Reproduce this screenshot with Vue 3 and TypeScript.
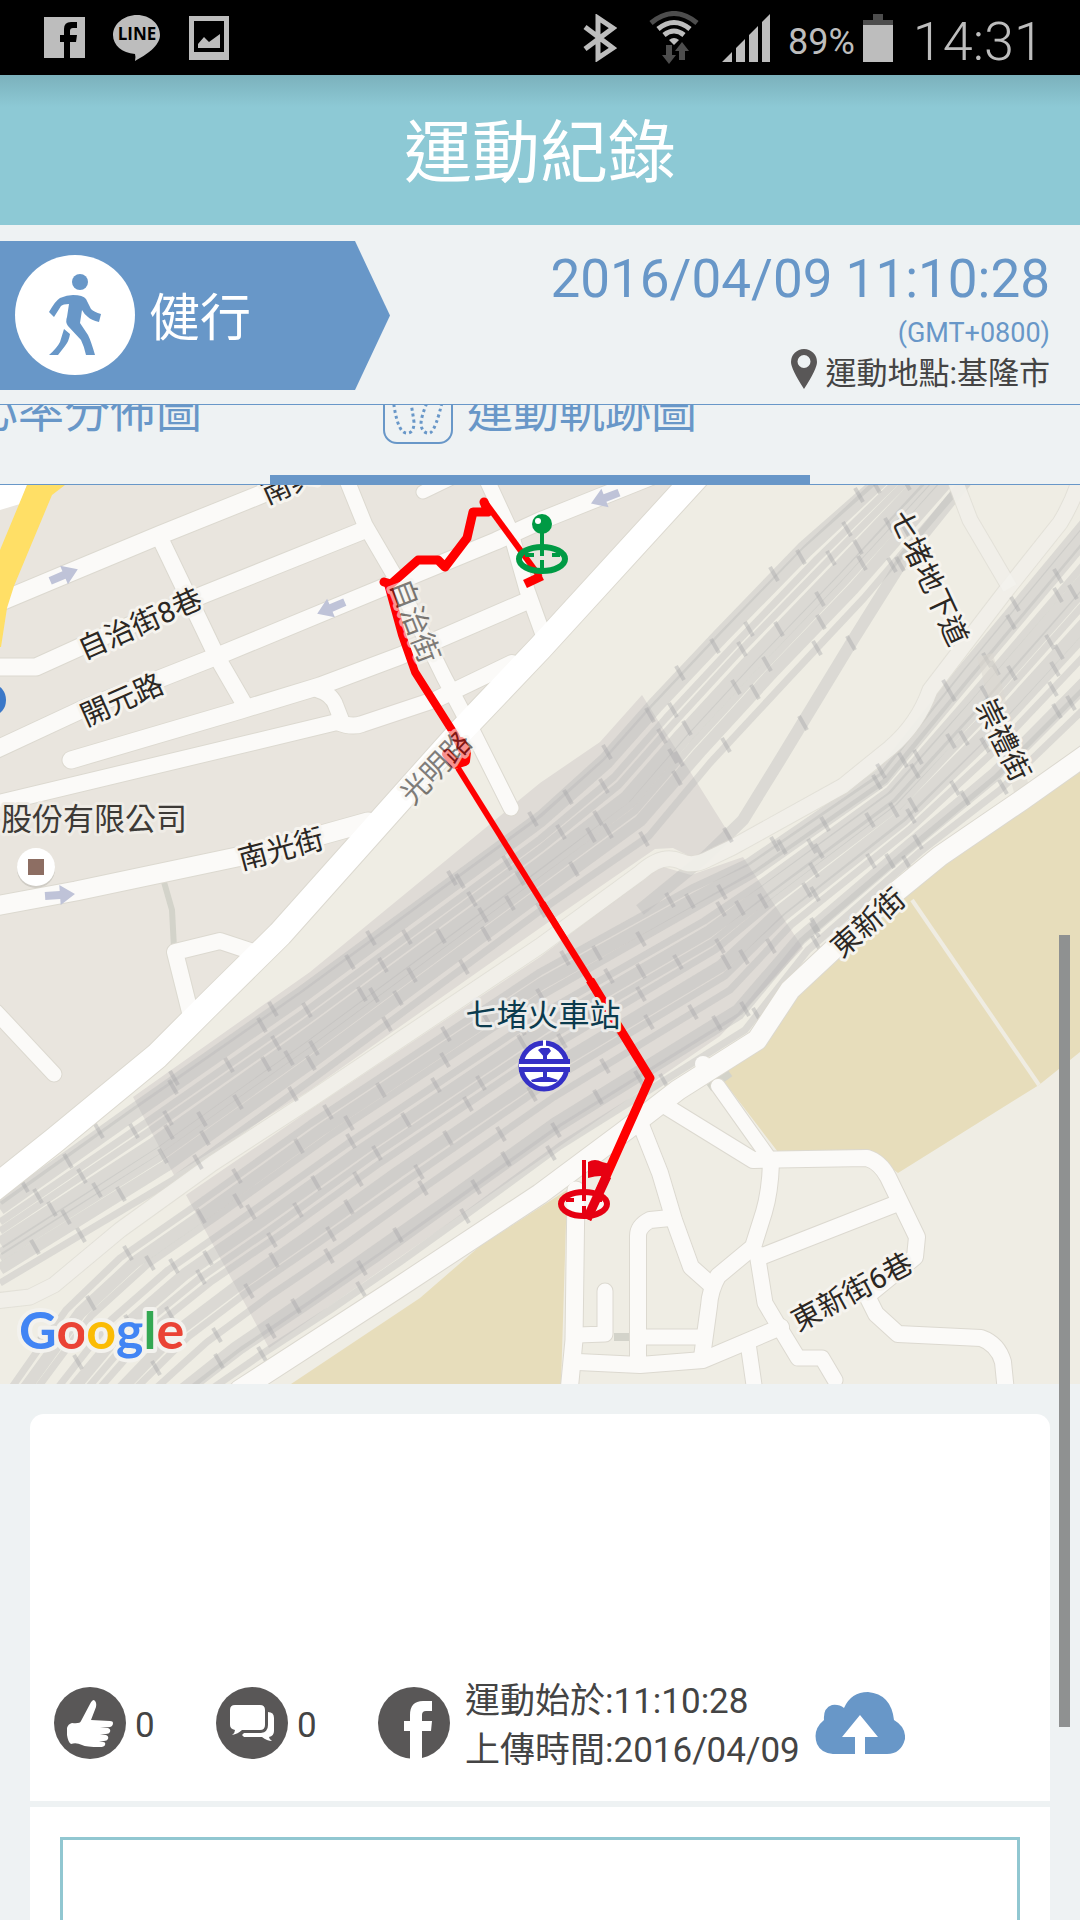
<script setup lang="ts">
import { computed, ref } from 'vue'

type Point = [number, number]

interface Road {
  d: string
  width: number
}

interface MapLabel {
  text: string
  x: number
  y: number
  angle: number
  faded?: boolean
}

const activeTab = ref('track')
const likes = ref(0)
const comments = ref(0)

const blockRoads: Road[] = [
  { d: 'M-10 606L64 575L160 535L262 494L300 478', width: 18 },
  { d: 'M-5 667H36L100 638L205 594L362 531', width: 17 },
  { d: 'M-5 750L83 709L220 655L382 588L496 541L540 521L600 497L650 477', width: 17 },
  { d: 'M71 760L241 710L320 686L400 656L527 601', width: 17 },
  { d: 'M-5 804L337 722Q352 728 362 724L437 699L512 663', width: 16 },
  { d: 'M318 690Q332 694 336 706L343 724', width: 15 },
  { d: 'M346 478L365 525L393 573L444 677L472 730L511 808', width: 15 },
  { d: 'M160 538L217 657L243 702', width: 16 },
  { d: 'M486 478L510 530L527 590L545 640', width: 15 },
  { d: 'M423 492L460 474', width: 13 },
  { d: 'M-5 906L76 891L237 857L300 841L368 822', width: 19 },
  { d: 'M190 1012L175 952L220 941L256 953', width: 16 },
  { d: 'M-4 1012L54 1074', width: 15 },
]

const eastRoads: Road[] = [
  { d: 'M576 1190L574 1340L569 1392', width: 17 },
  { d: 'M641 1125L660 1173L674 1220L691 1267L709 1283', width: 16 },
  { d: 'M667 1107L753 1160L867 1158Q880 1162 888 1177L917 1237L915 1257L867 1296L876 1314L898 1334L981 1338Q998 1344 1003 1362L1006 1392', width: 16 },
  { d: 'M718 1086L767 1155', width: 14 },
  { d: 'M771 1163Q770 1192 764 1212L753 1247L718 1276Q710 1290 709 1306L702 1357', width: 16 },
  { d: 'M760 1257L898 1203', width: 16 },
  { d: 'M757 1253L765 1303L781 1330L798 1358H822L835 1380', width: 15 },
  { d: 'M670 1218L650 1220Q638 1226 638 1236V1363', width: 16 },
  { d: 'M578 1362L640 1365L703 1360L781 1327', width: 16 },
  { d: 'M605 1291V1334L578 1335', width: 15 },
  { d: 'M643 1337H702', width: 15 },
  { d: 'M748 1343L755 1392', width: 15 },
]

const railRoads: Road[] = [
  { d: 'M-5 1301L30 1297L54 1285L120 1230L213 1163L310 1100L540 946L640 873Q662 853 680 861Q692 867 706 860L733 847L843 786L890 748Q918 724 930 690L1005 592L1060 523Q1074 500 1080 478', width: 15 },
  { d: 'M954 478L970 520L1010 588', width: 15 },
]

const edgeRoads: Road[] = [
  { d: 'M1090 752L1022 800L940 856L880 905L836 947L790 990L757 1040L678 1090L626 1130L540 1194L396 1289L240 1390', width: 20 },
]

const mainRoad: Road = {
  d: 'M700 473L540 648L462 730L355 850L280 934L205 1008L157 1056L55 1140L-8 1190',
  width: 25,
}

const northUpper: Point[] = [[0, 1200], [133, 1104], [300, 988], [540, 812], [602, 755], [650, 702], [715, 632], [800, 545], [874, 480]]
const northLower: Point[] = [[0, 1286], [174, 1182], [310, 1084], [540, 914], [650, 838], [712, 765], [790, 680], [866, 600], [968, 480]]
const southUpper: Point[] = [[10, 1390], [66, 1310], [120, 1258], [192, 1208], [310, 1124], [540, 972], [692, 888], [748, 862], [880, 772], [962, 668], [1085, 520]]
const southLower: Point[] = [[210, 1390], [262, 1354], [330, 1310], [400, 1262], [470, 1212], [560, 1146], [745, 1030], [808, 950], [920, 852], [1000, 790], [1085, 708]]

function blend(upper: Point[], lower: Point[], t: number): Point[] {
  return upper.map(([x, y], i) => [
    Math.round(x + (lower[i][0] - x) * t),
    Math.round(y + (lower[i][1] - y) * t),
  ])
}

function toPath(points: Point[]): string {
  return 'M' + points.map(([x, y]) => `${x} ${y}`).join('L')
}

function bundle(upper: Point[], lower: Point[], stops: number[]): Point[][] {
  return stops.map((t) => blend(upper, lower, t))
}

const siding: Point[] = [[640, 910], [705, 857], [743, 820], [780, 760], [853, 640], [905, 557], [967, 480]]

const tracks: Point[][] = [
  ...bundle(northUpper, northLower, [0.02, 0.1, 0.26, 0.36, 0.5, 0.6, 0.68, 0.8, 0.97]),
  ...bundle(southUpper, southLower, [0, 0.07, 0.13, 0.23, 0.31, 0.38, 0.44, 0.55, 0.62, 0.72, 0.86, 0.9, 1]),
  siding,
]

// Short cross marks that the map draws along each railway line.
const ties = computed(() => {
  let d = ''
  tracks.forEach((line, n) => {
    let next = 30 + ((n * 53) % 90)
    for (let i = 0; i < line.length - 1; i++) {
      const [ax, ay] = line[i]
      const [bx, by] = line[i + 1]
      const length = Math.hypot(bx - ax, by - ay)
      while (next < length) {
        const x = Math.round(ax + ((bx - ax) * next) / length)
        const y = Math.round(ay + ((by - ay) * next) / length)
        d += `M${x - 4} ${y - 7}l8 14`
        next += 92 + ((n * 37 + i * 29) % 50)
      }
      next -= length
    }
  })
  return d
})

const labels: MapLabel[] = [
  { text: '南興路', x: 303, y: 478, angle: -24 },
  { text: '自治街8巷', x: 140, y: 624, angle: -24 },
  { text: '開元路', x: 122, y: 700, angle: -24 },
  { text: '南光街', x: 281, y: 849, angle: -15 },
  { text: '光明路', x: 436, y: 768, angle: -46, faded: true },
  { text: '自治街', x: 415, y: 621, angle: 69, faded: true },
  { text: '七堵地下道', x: 929, y: 578, angle: 65 },
  { text: '崇禮街', x: 1003, y: 740, angle: 64 },
  { text: '東新街', x: 868, y: 923, angle: -41 },
  { text: '東新街6巷', x: 852, y: 1292, angle: -28 },
]

const arrows = [
  { x: 64, y: 575, angle: -23 },
  { x: 331, y: 608, angle: 157 },
  { x: 605, y: 498, angle: 159 },
  { x: 60, y: 895, angle: -4 },
]
</script>

<template>
  <div class="screen">
    <div class="status-bar">
      <div class="notices">
        <svg width="41" height="41" viewBox="0 0 41 41" aria-hidden="true">
          <path fill="#bdbdbd" d="M0 0H41V41H26V25H32L33 18H26V14Q26 11 29 11H33V5H27Q20 5 20 12V18H16V25H20V41H0Z" />
        </svg>
        <svg width="48" height="46" viewBox="0 0 48 46" aria-hidden="true">
          <path fill="#bdbdbd" d="M24 0C37 0 47 9 47 20C47 31 33 40 22 46Q23 42 22 39C9 38 0 30 0 20C0 9 11 0 24 0Z" />
          <text x="24" y="25" text-anchor="middle" class="line-logo">LINE</text>
        </svg>
        <svg width="40" height="44" viewBox="0 0 40 44" aria-hidden="true">
          <path fill="#bdbdbd" fill-rule="evenodd" d="M0 0H40V44H0ZM5 5V36H35V5ZM9 32V28L15 21L20 26L31 18V32Z" />
        </svg>
      </div>
      <div class="device">
        <svg class="bluetooth" width="34" height="48" viewBox="0 0 34 48" aria-hidden="true">
          <path fill="none" stroke="#bdbdbd" stroke-width="5" d="M2 13L30 34L15 44V4L30 14L2 35" />
        </svg>
        <svg class="wifi" width="50" height="54" viewBox="0 0 50 54" aria-hidden="true">
          <path fill="none" stroke="#4d4d4d" stroke-width="5" d="M2 12Q25 -7 48 12" />
          <path fill="none" stroke="#bdbdbd" stroke-width="5" d="M9 18Q25 5 41 18M15 24Q25 16 35 24" />
          <path fill="#bdbdbd" d="M20 29Q25 25 30 29L25 34Z" />
          <path fill="#4d4d4d" d="M17 34H23V44H27L20 53L13 44H17ZM30 49V40H26L33 31L40 40H36V49Z" />
        </svg>
        <svg class="signal" width="48" height="48" viewBox="0 0 48 48" aria-hidden="true">
          <path fill="#bdbdbd" d="M0 48L10 38V48ZM14 48V34L23 25V48ZM27 48V21L36 12V48ZM40 48V8L48 0V48Z" />
        </svg>
        <span class="percent">89%</span>
        <svg class="battery" width="30" height="48" viewBox="0 0 30 48" aria-hidden="true">
          <path fill="#4d4d4d" d="M10 0H20V6H30V12H0V6H10Z" />
          <path fill="#bdbdbd" d="M0 11H30V48H0Z" />
        </svg>
        <span class="clock">14:31</span>
      </div>
    </div>

    <header class="title-bar">
      <h1>運動紀錄</h1>
    </header>

    <section class="summary">
      <div class="sport">
        <svg width="120" height="120" viewBox="0 0 120 120" aria-hidden="true">
          <circle cx="60" cy="60" r="60" fill="#fff" />
          <g fill="#6897c8">
            <circle cx="65" cy="27" r="8" />
            <path d="M34 57Q41 45 45 43Q52 40 58 40Q68 40 71 44L76 54Q79 57 86 59L84 67Q76 65 73 62Q69 59 67 55L65 68L73 80Q76 86 80 100H71Q69 91 66 85L53 71Q50 67 52 62L54 49Q48 49 46 51L39 62Z" />
            <path d="M49 74L55 79Q54 86 50 91L43 100H34Q42 93 45 87Z" />
          </g>
        </svg>
        <span class="sport-name">健行</span>
      </div>
      <div class="when">
        <time class="date" datetime="2016-04-09T11:10:28+08:00">2016/04/09 11:10:28</time>
        <span class="zone">(GMT+0800)</span>
        <span class="place">
          <svg width="26" height="40" viewBox="0 0 26 40" aria-hidden="true">
            <path fill="#595757" fill-rule="evenodd" d="M13 0A13 13 0 0 1 26 13Q26 20 13 40Q0 20 0 13A13 13 0 0 1 13 0ZM13 6A6 6 0 0 0 13 19A6 6 0 0 0 13 6Z" />
          </svg>
          運動地點:基隆市
        </span>
      </div>
    </section>

    <nav class="tabs">
      <div class="tab-track">
        <button type="button" class="tab tab-heart" :class="{ active: activeTab === 'heart' }" @click="activeTab = 'heart'">
          <span class="tab-text">心率分佈圖</span>
        </button>
        <button type="button" class="tab" :class="{ active: activeTab === 'track' }" @click="activeTab = 'track'">
          <svg width="70" height="70" viewBox="0 0 70 70" aria-hidden="true">
            <rect x="1" y="1" width="68" height="68" rx="13" fill="none" stroke="#6897c8" stroke-width="2" />
            <path fill="none" stroke="#6897c8" stroke-width="3" stroke-dasharray="3 3" d="M10 24Q14 58 23 59Q31 60 31 48Q29 34 27 24M46 24Q38 42 38 50Q39 60 47 59Q53 56 60 24" />
          </svg>
          <span class="tab-text">運動軌跡圖</span>
        </button>
      </div>
    </nav>

    <svg class="map" viewBox="0 485 1080 899" role="img" aria-label="運動軌跡圖">
      <rect x="0" y="485" width="1080" height="899" fill="#e9e5de" />
      <path fill="#efede4" d="M700 473L540 648L462 730L280 934L157 1056L0 1183V1384H1080V485Z" />
      <path fill="#e9e5de" d="M670 485L545 638L500 530L650 485Z" />
      <path fill="#e7ddbb" d="M1080 765L1022 800L905 893L836 947L757 1040L715 1070L778 1152L867 1150L898 1173L1039 1085L1080 1052Z" />
      <path fill="none" stroke="#efece2" stroke-width="4" d="M912 900L1039 1085" />
      <path fill="#e7ddbb" d="M291 1384L420 1298L480 1246L567 1190L561 1384Z" />
      <path fill="#dfdbd6" d="M133 1097L310 972L540 783L600 742L642 695L733 840L693 858L673 848L655 849L540 928L310 1090L174 1175Z" />
      <path fill="#dfdbd6" d="M186 1195L310 1110L540 957L660 866L691 875L743 857L803 948L720 1036L560 1146L269 1348Z" />

      <g fill="none" stroke-linejoin="round">
        <path v-for="(line, i) in tracks" :key="'t' + i" :d="toPath(line)" class="rail" :class="{ wide: i % 3 === 1 }" />
        <path v-for="(r, i) in railRoads" :key="'ro' + i" :d="r.d" :stroke-width="r.width + 2" stroke="#dedbd3" opacity="0.7" />
        <path v-for="(r, i) in railRoads" :key="'ri' + i" :d="r.d" :stroke-width="r.width" stroke="#f4f2ed" opacity="0.8" />
        <path :d="ties" class="tie" />
        <path d="M985 655L1023 795" stroke="#dbd8d0" stroke-width="16" opacity="0.5" />
        <path d="M164 882L172 910L174 948" stroke="#d3d3ca" stroke-width="6" />
        <path d="M614 1337H630M709 1088L730 1073" stroke="#d3d3ca" stroke-width="8" />
      </g>

      <path fill="#fff" d="M0 485H27L20 504L0 510Z" />

      <g fill="none" stroke-linecap="round" stroke-linejoin="round">
        <path v-for="(r, i) in [...blockRoads, ...eastRoads, ...edgeRoads, mainRoad]" :key="'o' + i" :d="r.d" :stroke-width="r.width + 2" stroke="#dcd9d0" />
        <path v-for="(r, i) in [...blockRoads, ...eastRoads, ...edgeRoads]" :key="'i' + i" :d="r.d" :stroke-width="r.width" stroke="#fbfaf8" />
        <circle cx="703" cy="1064" r="8" fill="#fbfaf8" />
        <path :d="mainRoad.d" :stroke-width="mainRoad.width" stroke="#fff" />
      </g>
      <path fill="#ffdf66" d="M27 485H65L52 495L14 586L7 608L1 647H0V550Z" />

      <path v-for="(a, i) in arrows" :key="'a' + i" :transform="`translate(${a.x} ${a.y}) rotate(${a.angle})`" fill="#bfc3d8" d="M-15 -4H0V-10L15 0L0 10V4H-15Z" />

      <g fill="none" stroke="#f00" stroke-linejoin="round">
        <path stroke-width="9" stroke-linecap="round" d="M484 502L488 512L473 512L467 538L445 567L438 560H418L391 584L384 582" />
        <path stroke-width="6" d="M485 502L540 577" />
        <path stroke-width="9" d="M525 584L542 576" />
        <path stroke-width="8" d="M388 584L402 635L415 672L455 735L463 752" />
        <path stroke-width="10" stroke-linecap="round" d="M461 742L466 752L465 761L455 764L447 754" />
        <path stroke-width="6" d="M458 768L566 941" />
        <path stroke-width="7" d="M542 903L600 996" />
        <path stroke-width="9" d="M590 980L650 1078L587 1219" />
      </g>

      <g v-for="l in labels" :key="l.text" :transform="`translate(${l.x} ${l.y}) rotate(${l.angle})`">
        <text class="street" :class="{ faded: l.faded }" y="10" text-anchor="middle">{{ l.text }}</text>
      </g>
      <text class="company" x="187" y="830" text-anchor="end">業股份有限公司</text>
      <text class="station" x="543" y="1026" text-anchor="middle">七堵火車站</text>

      <circle cx="36" cy="869" r="19" fill="#cfccc5" />
      <circle cx="36" cy="867" r="19" fill="#fff" />
      <rect x="28" y="859" width="16" height="16" fill="#8d6e63" />
      <ellipse cx="-6" cy="700" rx="12" ry="15" fill="#3b78c8" />

      <g>
        <circle cx="544" cy="1066" r="25" fill="#fff" />
        <path fill="#3530c6" d="M519 1059H570V1064H519ZM519 1067H570V1072H519ZM543 1054H547V1078H543ZM538 1050L541 1048H549L551 1051L545 1058ZM531 1080L541 1077H549L558 1080L556 1082H532Z" />
        <circle cx="544" cy="1066" r="23" fill="none" stroke="#3530c6" stroke-width="5" />
        <path fill="#fff" d="M543 1040H546V1048H543ZM519 1064H570V1067H519Z" />
      </g>

      <g fill="none" stroke="#009a44">
        <ellipse cx="542" cy="559" rx="23" ry="12" stroke-width="6" />
        <path stroke-width="4" d="M542 530V556M542 560V570M525 555H534M552 555H560" />
        <circle cx="542" cy="524" r="10" fill="#009a44" stroke="none" />
        <circle cx="538" cy="521" r="3" fill="#fff" stroke="none" />
      </g>
      <g fill="none" stroke="#e60012">
        <path fill="#fff" fill-opacity="0.6" stroke-width="6" d="M561 1204A23 12 0 0 1 607 1204A23 12 0 0 1 561 1204Z" />
        <path stroke-width="4" d="M584 1160V1201M584 1206V1214M566 1200H574M594 1200H602" />
        <path fill="#e60012" stroke="none" d="M588 1162Q595 1158 602 1162L610 1164V1178Q602 1174 588 1178Z" />
      </g>
      <path fill="none" stroke="#e60012" stroke-width="9" d="M607 1176L587 1219" />

      <text class="google" x="19" y="1349">
        <tspan fill="#4285f4">G</tspan><tspan fill="#ea4335">o</tspan><tspan fill="#fbbc05">o</tspan><tspan fill="#4285f4">g</tspan><tspan fill="#34a853">l</tspan><tspan fill="#ea4335">e</tspan>
      </text>
    </svg>

    <main class="cards">
      <section class="card actions-card">
        <div class="actions">
          <button type="button" class="action" aria-label="讚" @click="likes++">
            <svg width="72" height="72" viewBox="0 0 72 72" aria-hidden="true">
              <circle cx="36" cy="36" r="36" fill="#595757" />
              <path fill="#fff" d="M36 17Q38 13 40 13Q43 15 42 20L37 33L56 34Q59 34 59 36Q59 39 56 40L46 41H54Q57 42 56 45Q55 47 52 47L46 48H52Q55 49 54 52Q53 54 50 54L45 55H49Q52 55 51 58Q50 60 46 60Q32 60 28 58Q22 55 17 57Q14 55 13 48V41Q14 37 18 36Q26 37 27 34Z" />
            </svg>
            <span class="count">{{ likes }}</span>
          </button>
          <button type="button" class="action" aria-label="留言" @click="comments++">
            <svg width="72" height="72" viewBox="0 0 72 72" aria-hidden="true">
              <circle cx="36" cy="36" r="36" fill="#595757" />
              <path fill="#fff" d="M19 18H44Q49 18 49 23V38Q49 43 44 43H26Q22 47 16 48Q19 46 19 43Q14 42 14 38V23Q14 18 19 18ZM52 25Q58 25 58 31V44Q58 49 53 50Q53 52 56 54Q51 54 46 50H28L26 48L28 46H45Q52 45 52 38Z" />
            </svg>
            <span class="count">{{ comments }}</span>
          </button>
          <button type="button" class="facebook" aria-label="Facebook">
            <svg width="72" height="72" viewBox="0 0 72 72" aria-hidden="true">
              <circle cx="36" cy="36" r="36" fill="#595757" />
              <path fill="#fff" d="M32 72V44H26V34H32V28Q32 14 45 14H54V24H48Q44 24 44 28V34H54L53 44H44V72Z" />
            </svg>
          </button>
          <p class="times">
            <span>運動始於:11:10:28</span>
            <span>上傳時間:2016/04/09</span>
          </p>
          <button type="button" class="upload" aria-label="上傳">
            <svg width="90" height="62" viewBox="0 0 90 62" aria-hidden="true">
              <path fill="#6897c8" d="M18 62Q6 61 2 52Q-3 38 9 28Q8 16 17 13Q24 12 29 16Q36 0 53 0Q76 2 79 28Q91 35 90 47Q86 62 72 62H50V45H63L45 23L27 45H40V62Z" />
            </svg>
          </button>
        </div>
      </section>
      <section class="card notes-card">
        <div class="notes"></div>
      </section>
    </main>

    <div class="scroll-thumb"></div>
  </div>
</template>

<style>
body {
  background: #eef2f3;
}
</style>

<style scoped>
.screen {
  position: relative;
  display: flex;
  flex-direction: column;
  box-sizing: border-box;
  min-height: 100vh;
  overflow: hidden;
  background: #eef2f3;
  color: #444;
  font-family: Roboto, "Noto Sans CJK TC", sans-serif;
}

button {
  padding: 0;
  border: 0;
  background: none;
  color: inherit;
  font: inherit;
  cursor: pointer;
}

svg {
  display: block;
  flex: none;
}

.status-bar {
  display: flex;
  align-items: center;
  justify-content: space-between;
  height: 75px;
  padding: 0 36px 0 44px;
  background: #000;
  color: #bdbdbd;
}

.notices {
  display: flex;
  align-items: center;
  gap: 28px;
}

.line-logo {
  font: 700 17px "Open Sans", sans-serif;
}

.device {
  display: flex;
  align-items: center;
}

.bluetooth {
  margin-right: 32px;
}

.wifi {
  margin-right: 23px;
}

.signal {
  margin-right: 18px;
}

.percent,
.clock {
  padding-top: 8px;
  line-height: 64px;
}

.percent {
  margin-right: 8px;
  font-size: 36px;
}

.battery {
  margin-right: 20px;
}

.clock {
  font-size: 54px;
  font-weight: 300;
}

.title-bar {
  display: flex;
  align-items: center;
  justify-content: center;
  box-sizing: border-box;
  height: 150px;
  padding-top: 8px;
  background: linear-gradient(#7bb1bc, #8dc9d5 32px);
  color: #fff;
}

h1 {
  margin: 0;
  font-size: 68px;
  font-weight: 400;
  line-height: 100px;
}

.summary {
  display: flex;
  justify-content: space-between;
  box-sizing: border-box;
  height: 180px;
  padding: 16px 30px 0 0;
  border-bottom: 1px solid #6897c8;
}

.sport {
  display: flex;
  align-items: center;
  gap: 14px;
  box-sizing: border-box;
  width: 390px;
  height: 149px;
  padding: 0 0 2px 15px;
  background: #6897c8;
  clip-path: polygon(0 0, 355px 0, 100% 50%, 355px 100%, 0 100%);
  color: #fff;
  font-size: 51px;
}

.sport-name {
  padding-bottom: 2px;
}

.when {
  display: flex;
  flex-direction: column;
  align-items: flex-end;
  color: #6897c8;
}

.date {
  font-size: 53px;
  line-height: 76px;
}

.zone {
  font-size: 27px;
  line-height: 32px;
}

.place {
  display: flex;
  gap: 8px;
  color: #444;
  font-size: 31px;
  line-height: 50px;
}

.tabs {
  display: flex;
  align-items: flex-end;
  box-sizing: border-box;
  height: 80px;
  overflow: hidden;
  border-bottom: 1px solid #6897c8;
}

.tab-track {
  display: flex;
  flex: none;
  width: 100%;
  margin-left: -25%;
}

.tab {
  display: flex;
  align-items: center;
  justify-content: center;
  gap: 14px;
  box-sizing: border-box;
  flex: none;
  width: 50%;
  height: 150px;
  color: #6897c8;
  font-size: 46px;
  line-height: 60px;
}

.tab-text {
  padding-top: 4px;
}

.tab-heart {
  justify-content: flex-end;
  padding-right: 68px;
}

.tab.active {
  box-shadow: inset 0 -9px #6897c8;
}

.map {
  width: 100%;
  height: auto;
}

.rail {
  stroke: #b6b7b7;
  stroke-width: 7;
  opacity: 0.36;
}

.rail.wide {
  stroke-width: 12;
}

.tie {
  stroke: #a4a5a8;
  stroke-width: 4;
  opacity: 0.4;
}

.street,
.company,
.station {
  fill: #2b2723;
  stroke: #f6f4ef;
  stroke-width: 6px;
  stroke-linejoin: round;
  paint-order: stroke;
  font-size: 29px;
}

.faded {
  opacity: 0.6;
}

.company,
.station {
  font-size: 31px;
}

.company {
  fill: #3d3a36;
  stroke: #efece6;
}

.station {
  fill: #0b3b4e;
  stroke: #ececea;
}

.google {
  stroke: #f3f2ee;
  stroke-width: 8px;
  stroke-linejoin: round;
  paint-order: stroke;
  font: 700 52px Lato, sans-serif;
}

.cards {
  display: flex;
  flex: 1;
  flex-direction: column;
  gap: 6px;
  padding: 30px 30px 0;
}

.card {
  box-sizing: border-box;
  background: #fff;
}

.actions-card {
  display: flex;
  align-items: flex-end;
  height: 387px;
  padding: 0 24px 26px;
  border-radius: 14px 14px 0 0;
}

.actions {
  display: flex;
  align-items: center;
  font-size: 35px;
}

.action {
  display: flex;
  align-items: center;
  gap: 9px;
  width: 162px;
}

.count {
  padding-top: 4px;
}

.times {
  display: flex;
  flex-direction: column;
  margin: 0 15px;
  padding-top: 6px;
  line-height: 49px;
  white-space: nowrap;
}

.notes-card {
  display: flex;
  flex: 1;
  min-height: 113px;
  padding: 30px 30px 0;
}

.notes {
  flex: 1;
  border: 3px solid #91c7d1;
  border-bottom: 0;
}

.scroll-thumb {
  position: absolute;
  top: 935px;
  right: 10px;
  width: 11px;
  height: 792px;
  background: #8f9191;
}
</style>
